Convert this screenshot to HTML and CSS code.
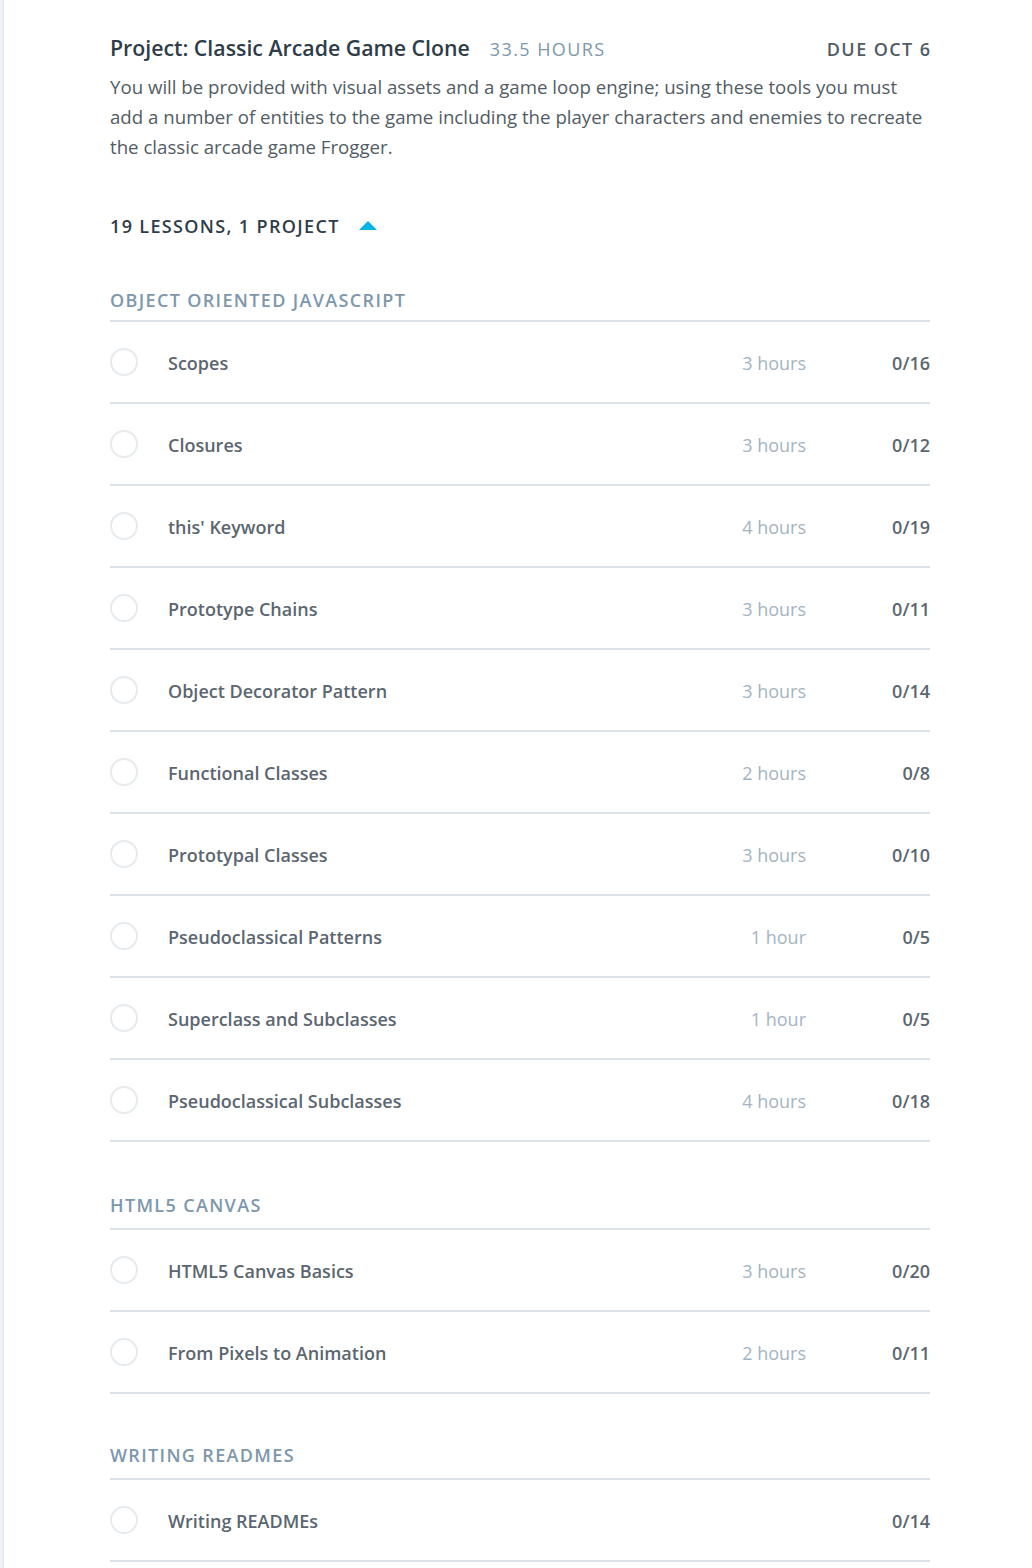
FILE: index.html
```html
<!DOCTYPE html>
<html>
<head>
<meta charset="utf-8">
<link rel="stylesheet" href="styles.css">
</head>
<body>
<div class="page">
  <aside class="rail"></aside>
  <main class="content">
    <div class="proj-head">
      <h1 class="proj-title">Project: Classic Arcade Game Clone</h1>
      <span class="proj-hours">33.5 hours</span>
      <span class="proj-due">Due Oct 6</span>
    </div>
    <p class="proj-desc">You will be provided with visual assets and a game loop engine; using these tools you must add a number of entities to the game including the player characters and enemies to recreate the classic arcade game Frogger.</p>

    <div class="toggle">
      <span class="toggle-label">19 Lessons, 1 Project</span>
      <svg class="caret" width="18" height="9" viewBox="0 0 18 9"><path d="M0 9 L9 0 L18 9 Z" fill="#02b3e4"/></svg>
    </div>

    <section class="group first">
      <h2 class="group-title">Object Oriented JavaScript</h2>
      <ul class="lessons">
        <li class="lesson"><span class="check"></span><span class="name">Scopes</span><span class="hours">3 hours</span><span class="count">0/16</span></li>
        <li class="lesson"><span class="check"></span><span class="name">Closures</span><span class="hours">3 hours</span><span class="count">0/12</span></li>
        <li class="lesson"><span class="check"></span><span class="name">this' Keyword</span><span class="hours">4 hours</span><span class="count">0/19</span></li>
        <li class="lesson"><span class="check"></span><span class="name">Prototype Chains</span><span class="hours">3 hours</span><span class="count">0/11</span></li>
        <li class="lesson"><span class="check"></span><span class="name">Object Decorator Pattern</span><span class="hours">3 hours</span><span class="count">0/14</span></li>
        <li class="lesson"><span class="check"></span><span class="name">Functional Classes</span><span class="hours">2 hours</span><span class="count">0/8</span></li>
        <li class="lesson"><span class="check"></span><span class="name">Prototypal Classes</span><span class="hours">3 hours</span><span class="count">0/10</span></li>
        <li class="lesson"><span class="check"></span><span class="name">Pseudoclassical Patterns</span><span class="hours">1 hour</span><span class="count">0/5</span></li>
        <li class="lesson"><span class="check"></span><span class="name">Superclass and Subclasses</span><span class="hours">1 hour</span><span class="count">0/5</span></li>
        <li class="lesson"><span class="check"></span><span class="name">Pseudoclassical Subclasses</span><span class="hours">4 hours</span><span class="count">0/18</span></li>
      </ul>
    </section>

    <section class="group">
      <h2 class="group-title">HTML5 Canvas</h2>
      <ul class="lessons">
        <li class="lesson"><span class="check"></span><span class="name">HTML5 Canvas Basics</span><span class="hours">3 hours</span><span class="count">0/20</span></li>
        <li class="lesson"><span class="check"></span><span class="name">From Pixels to Animation</span><span class="hours">2 hours</span><span class="count">0/11</span></li>
      </ul>
    </section>

    <section class="group last">
      <h2 class="group-title">Writing READMEs</h2>
      <ul class="lessons">
        <li class="lesson"><span class="check"></span><span class="name">Writing READMEs</span><span class="hours"></span><span class="count">0/14</span></li>
      </ul>
    </section>
  </main>
</div>
</body>
</html>
```

FILE: styles.css
```css
html, body {
  margin: 0;
  padding: 0;
  background: #ffffff;
}

body {
  font-family: "Open Sans", "Liberation Sans", sans-serif;
  color: #525c65;
}

.page {
  display: flex;
  min-height: 1568px;
}

.rail {
  width: 3px;
  flex: none;
  background: #f0f3f6;
  border-right: 1px solid #dde3e9;
}

.content {
  width: 820px;
  margin-left: 106px;
  padding-top: 34px;
}

.proj-head {
  display: flex;
  align-items: baseline;
}

.proj-title {
  margin: 0;
  font-size: 21.3px;
  font-weight: 600;
  line-height: 28px;
  color: #2e3d49;
}

.proj-hours {
  margin-left: 20px;
  font-size: 18px;
  letter-spacing: 1.4px;
  text-transform: uppercase;
  color: #7d97ad;
}

.proj-due {
  margin-left: auto;
  margin-right: -1.4px;
  font-size: 18px;
  font-weight: 600;
  letter-spacing: 1.4px;
  text-transform: uppercase;
  color: #525c65;
}

.proj-desc {
  margin: 10px 0 0;
  font-size: 18.66px;
  line-height: 30px;
  color: #525c65;
}

.toggle {
  display: flex;
  align-items: center;
  gap: 19px;
  margin-top: 52px;
  height: 24px;
}

.toggle-label {
  font-size: 18px;
  font-weight: 600;
  letter-spacing: 1.35px;
  text-transform: uppercase;
  color: #2e3d49;
}

.caret {
  display: block;
  margin-top: -2px;
}

.group {
  margin-top: 51px;
}

.group.first {
  margin-top: 50px;
}

.group.last {
  margin-top: 49px;
}

.group-title {
  margin: 0;
  padding-bottom: 11px;
  font-size: 18px;
  font-weight: 600;
  line-height: 24px;
  letter-spacing: 1.35px;
  text-transform: uppercase;
  color: #7d97ad;
  border-bottom: 2px solid #dbe2e8;
}

.group.first .group-title {
  padding-bottom: 8px;
}

.lessons {
  list-style: none;
  margin: 0;
  padding: 0;
}

.lesson {
  display: flex;
  align-items: center;
  height: 80px;
  border-bottom: 2px solid #dbe2e8;
}

.check {
  flex: none;
  width: 24px;
  height: 24px;
  border: 2px solid #e6ebef;
  border-radius: 50%;
  margin-right: 30px;
}

.name,
.hours,
.count {
  padding-top: 2px;
  font-size: 18px;
}

.name {
  flex: 1;
  font-weight: 600;
  color: #5b6670;
}

.hours {
  width: 120px;
  text-align: right;
  color: #a3b4c3;
}

.count {
  width: 124px;
  text-align: right;
  font-weight: 600;
  color: #5b6670;
}
```
